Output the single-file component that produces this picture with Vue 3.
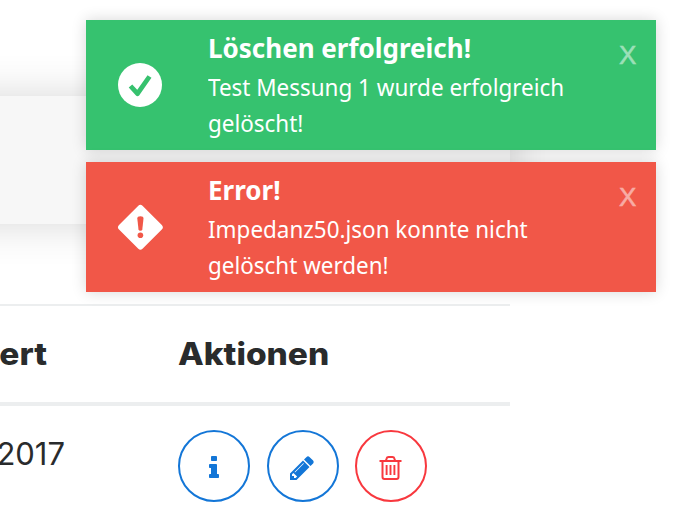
<script setup>
const toasts = [
  { kind: 'success', title: 'Löschen erfolgreich!', lines: ['Test Messung 1 wurde erfolgreich', 'gelöscht!'] },
  { kind: 'error', title: 'Error!', lines: ['Impedanz50.json konnte nicht', 'gelöscht werden!'] },
]
</script>

<template>
  <div class="page">
    <main class="content">
      <div class="panel"></div>
      <section class="table">
        <div class="row head">
          <div class="cell date"><span class="ert">ert</span></div>
          <div class="cell"><span class="actions-title">Aktionen</span></div>
        </div>
        <div class="row body">
          <div class="cell date"><span class="year">2017</span></div>
          <div class="cell buttons">
            <button class="btn">
              <svg width="28" height="28" viewBox="0 0 1792 1792"><path fill="currentColor" d="M1216 1344v128q0 26-19 45t-45 19h-512q-26 0-45-19t-19-45v-128q0-26 19-45t45-19h64v-384h-64q-26 0-45-19t-19-45v-128q0-26 19-45t45-19h384q26 0 45 19t19 45v576h64q26 0 45 19t19 45zm-128-1152v192q0 26-19 45t-45 19h-256q-26 0-45-19t-19-45v-192q0-26 19-45t45-19h256q26 0 45 19t19 45z" /></svg>
            </button>
            <button class="btn pencil">
              <svg width="28" height="28" viewBox="0 0 1792 1792"><path fill="currentColor" d="M491 1536l91-91-235-235-91 91v107h128v128h107zm523-928q0-22-22-22-10 0-17 7l-542 542q-7 7-7 17 0 22 22 22 10 0 17-7l542-542q7-7 7-17zm-54-192l416 416-832 832h-416v-416zm683 96q0 53-37 90l-166 166-416-416 166-165q36-38 90-38 53 0 91 38l235 234q37 39 37 91z" /></svg>
            </button>
            <button class="btn danger">
              <svg width="28" height="28" viewBox="0 0 28 28" fill="none" stroke="currentColor">
                <path stroke-width="2" d="M2.500 7H24.500M5.500 7.500V23Q5.500 25 7.500 25H19.500Q21.500 25 21.500 23V7.500M9 6.500L9.600 4.600Q10 3 11.600 3H15.400Q17 3 17.400 4.600L18 6.500" />
                <path stroke-width="1.900" d="M9.600 11V21M13.500 11V21M17.400 11V21" />
              </svg>
            </button>
          </div>
        </div>
      </section>
    </main>
    <aside class="toasts">
      <article v-for="t in toasts" :key="t.kind" class="toast" :class="t.kind">
        <div class="icon">
          <svg v-if="t.kind === 'success'" width="48" height="48" viewBox="0 0 48 48">
            <circle cx="24" cy="24" r="22" fill="#fff" />
            <path d="M14.500 25L21.500 32.700L33.500 15.500" fill="none" stroke="#36c16e" stroke-width="4.800" stroke-linejoin="round" />
          </svg>
          <svg v-else width="48" height="48" viewBox="0 0 48 48">
            <path d="M22.300 2.800Q24.400.700 26.500 2.800L45.800 22Q48 24.300 45.800 26.500L26.500 45.700Q24.400 47.600 22.300 45.700L3 26.500Q.800 24.300 3 22Z" fill="#fff" />
            <path d="M21.300 15.500Q21.300 13.300 24.400 13.300T27.500 15.500L26.300 26.500Q26 27.800 24.400 27.800T22.500 26.500Z" fill="#f15748" />
            <circle cx="24.400" cy="32.300" r="2.800" fill="#f15748" />
          </svg>
        </div>
        <div class="message">
          <div class="title"><span>{{ t.title }}</span></div>
          <div v-for="line in t.lines" :key="line" class="line">{{ line }}</div>
        </div>
        <span class="close">X</span>
      </article>
    </aside>
  </div>
</template>

<style>
body { margin: 0; background: #fff; }
</style>

<style scoped>
.page { position: relative; width: 676px; height: 520px; overflow: hidden; background: #fff; }
.content { display: flex; flex-direction: column; gap: 80px; width: 510px; padding-top: 96px; }
.panel { flex: none; height: 128px; margin-left: -60px; background: #f7f7f7; box-shadow: 0 0 40px rgba(0, 0, 0, .16); }
.table { font-family: Inter, "Liberation Sans", sans-serif; color: #292b2c; }
.row { display: grid; grid-template-columns: 178px 1fr; }
.head { box-sizing: border-box; height: 102px; padding-bottom: 2px; border-top: 2px solid #eceeef; border-bottom: 4px solid #eceeef; align-items: center; font-size: 31px; font-weight: 800; }
.cell { white-space: nowrap; }
.date span { display: flex; justify-content: flex-end; }
.ert { width: 47px; transform: scaleX(1.08); transform-origin: right; }
.year { width: 65px; }
.actions-title { display: inline-block; transform: scaleX(1.08); transform-origin: left; }
.body { padding-top: 24px; font-size: 31px; line-height: 48px; }
.buttons { display: flex; gap: 17px; }
.btn { box-sizing: border-box; display: flex; align-items: center; justify-content: center; width: 72px; height: 72px; padding: 4px 0 0; border: 2px solid #1376d7; border-radius: 50%; background: #fff; color: #1376d7; }
.pencil { padding-right: 2px; }
.danger { margin-left: -1px; border-color: #f8383e; color: #f8383e; }
.toasts { position: absolute; top: 20px; left: 86px; display: flex; flex-direction: column; gap: 12px; width: 570px; font-family: "Noto Sans", sans-serif; color: #fff; }
.toast { display: grid; grid-template-columns: 122px 1fr 50px; height: 130px; box-shadow: 0 0 14px rgba(0, 0, 0, .16); }
.success { background: rgba(46, 191, 105, .96); }
.error { background: rgba(240, 80, 65, .96); }
.icon { display: flex; align-items: center; padding-left: 30px; }
.message { padding-top: 10px; white-space: nowrap; }
.title { height: 39px; line-height: 36px; font-size: 26px; font-weight: 700; }
.line { height: 36px; line-height: 36px; font-size: 24px; transform: scaleX(.935); transform-origin: left; }
.close { padding: 18px 0 0 13px; font-family: "Liberation Sans", sans-serif; font-size: 26px; line-height: 34px; opacity: .5; -webkit-text-stroke: .5px #fff; }
</style>
